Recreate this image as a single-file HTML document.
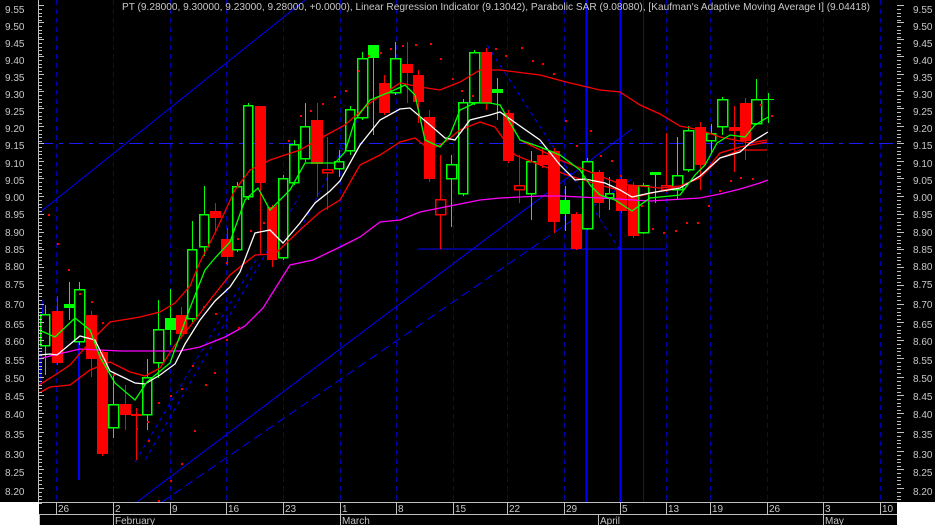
<!DOCTYPE html>
<html><head><meta charset="utf-8"><style>
html,body{margin:0;padding:0;background:#000;width:935px;height:525px;overflow:hidden}
svg{display:block}
text{font-family:"Liberation Sans",sans-serif;font-size:10px;fill:#c8c8c8}
</style></head><body>
<svg id="s" width="935" height="525" viewBox="0 0 935 525" xmlns="http://www.w3.org/2000/svg" shape-rendering="crispEdges">
<rect width="935" height="525" fill="#000"/>
<g id="grid"></g>
<g id="blue" stroke="#0000ff" fill="none" shape-rendering="auto">
<line x1="39" y1="213" x2="320" y2="-12" stroke-width="1"/>
<line x1="137" y1="502" x2="632" y2="129" stroke-width="1"/>
<line x1="162" y1="502" x2="635" y2="177" stroke-width="1" stroke-dasharray="9,5"/>
<line x1="135" y1="462" x2="262" y2="250" stroke-dasharray="4,4"/>
<line x1="145" y1="460" x2="300" y2="195" stroke-dasharray="4,4"/>
<line x1="300" y1="230" x2="360" y2="115" stroke-dasharray="4,4"/>
<line x1="487" y1="45" x2="622" y2="253" stroke-dasharray="4,4"/>
<line x1="43" y1="300" x2="40" y2="385"/>
<line x1="418" y1="249" x2="666" y2="249"/>
<line x1="39" y1="143.5" x2="897" y2="143.5" stroke-dasharray="14,6,4,6" stroke="#1a1aff"/>
<line x1="586.5" y1="0" x2="586.5" y2="502" stroke-width="2"/>
<line x1="620.5" y1="0" x2="620.5" y2="502" stroke-width="2"/>
<line x1="643.5" y1="0" x2="643.5" y2="502" stroke-width="1"/>
<line x1="79" y1="291" x2="79" y2="480" stroke-width="2"/>
</g>
<g id="cand"></g>
<g fill="none" stroke-width="1.3" shape-rendering="auto">
<polyline id="mag" stroke="#ff00ff" points="39,359 50,356 80,349 120,351 180,351 200,347 225,337 245,326 263,308 290,265 313,260 340,247 360,237 380,222 400,220 420,212 450,206 480,200 500,198 540,196 560,196 600,198 650,201 700,198 720,194 740,189 760,183 768,180"/>
<polyline stroke="#ff0000" points="39,385 55,375 70,365 90,342 110,322 140,317 160,312 175,303 190,286 200,262 215,233 235,190 250,170 270,160 300,150 330,133 345,125 370,103 400,83 420,87 440,90 460,82 480,70 500,70 540,75 570,83 600,90 620,92 640,105 660,114 680,126 700,130 720,137 750,143 767,140"/>
<polyline stroke="#ff0000" points="39,393 50,387 70,385 90,370 110,362 130,372 145,376 160,368 175,345 195,320 210,300 230,275 255,255 275,254 300,230 320,212 340,200 360,165 380,155 400,142 415,138 430,150 445,142 460,130 480,122 495,127 515,155 540,165 570,176 600,185 640,196 680,186 700,178 720,158 740,150 767,150"/>
<polyline stroke="#ff0000" points="520,140 560,160 590,172 620,184 660,188 680,186 700,178 720,153 740,147 767,142"/>
<polyline stroke="#ffffff" points="39,355 50,354 57,355 80,336 95,340 110,371 135,383 145,384 160,375 175,364 185,344 200,320 215,301 230,287 240,272 255,233 270,230 283,243 300,223 315,203 330,191 340,181 360,145 380,120 400,109 410,108 430,125 445,138 455,140 470,120 490,115 500,112 520,126 540,140 560,165 575,180 585,179 605,183 620,190 632,197 650,193 680,188 700,176 720,158 740,152 750,143 768,132"/>
<polyline stroke="#00ff00" points="39,330 55,337 75,318 90,330 100,357 115,383 135,400 147,382 170,363 190,308 205,270 215,258 230,242 245,200 258,188 270,210 290,190 305,163 320,163 335,163 345,152 355,120 370,100 390,92 405,85 415,95 425,140 440,147 450,135 460,110 475,103 490,103 500,105 520,140 540,147 560,155 580,170 590,185 600,195 615,200 632,211 650,198 680,195 695,175 705,165 717,143 730,135 745,137 755,125 768,117"/>
</g>
<g id="sar" fill="#ff0000"></g>
<g id="axes"></g>
<rect x="0" y="502" width="39" height="23" fill="#fff"/>
<rect x="897" y="502" width="38" height="23" fill="#fff"/>
<text x="122" y="10" textLength="748" lengthAdjust="spacingAndGlyphs">PT (9.28000, 9.30000, 9.23000, 9.28000, +0.0000), Linear Regression Indicator (9.13042), Parabolic SAR (9.08080), [Kaufman's Adaptive Moving Average I] (9.04418)</text>
<g id="lbl">
<text x="5" y="13">9.55</text><text x="5" y="30">9.50</text><text x="5" y="47">9.45</text><text x="5" y="64">9.40</text><text x="5" y="81">9.35</text><text x="5" y="98">9.30</text><text x="5" y="115">9.25</text><text x="5" y="132">9.20</text><text x="5" y="149">9.15</text><text x="5" y="167">9.10</text><text x="5" y="184">9.05</text><text x="5" y="201">9.00</text><text x="5" y="218">8.95</text><text x="5" y="236">8.90</text><text x="5" y="253">8.85</text><text x="5" y="270">8.80</text><text x="5" y="288">8.75</text><text x="5" y="308">8.70</text><text x="5" y="328">8.65</text><text x="5" y="345">8.60</text><text x="5" y="364">8.55</text><text x="5" y="382">8.50</text><text x="5" y="400">8.45</text><text x="5" y="418">8.40</text><text x="5" y="438">8.35</text><text x="5" y="458">8.30</text><text x="5" y="476">8.25</text><text x="5" y="495">8.20</text>
<text x="913" y="13">9.55</text><text x="913" y="30">9.50</text><text x="913" y="47">9.45</text><text x="913" y="64">9.40</text><text x="913" y="81">9.35</text><text x="913" y="98">9.30</text><text x="913" y="115">9.25</text><text x="913" y="132">9.20</text><text x="913" y="149">9.15</text><text x="913" y="167">9.10</text><text x="913" y="184">9.05</text><text x="913" y="201">9.00</text><text x="913" y="218">8.95</text><text x="913" y="236">8.90</text><text x="913" y="253">8.85</text><text x="913" y="270">8.80</text><text x="913" y="288">8.75</text><text x="913" y="308">8.70</text><text x="913" y="328">8.65</text><text x="913" y="345">8.60</text><text x="913" y="364">8.55</text><text x="913" y="382">8.50</text><text x="913" y="400">8.45</text><text x="913" y="418">8.40</text><text x="913" y="438">8.35</text><text x="913" y="458">8.30</text><text x="913" y="476">8.25</text><text x="913" y="495">8.20</text>
<text x="58" y="512">26</text><text x="115" y="512">2</text><text x="172" y="512">9</text><text x="228" y="512">16</text><text x="285" y="512">23</text><text x="342" y="512">1</text><text x="398" y="512">8</text><text x="455" y="512">15</text><text x="509" y="512">22</text><text x="566" y="512">29</text><text x="622" y="512">5</text><text x="668" y="512">13</text><text x="712" y="512">19</text><text x="769" y="512">26</text><text x="825" y="512">3</text><text x="882" y="512">10</text>
<text x="115" y="524">February</text><text x="342" y="524">March</text><text x="600" y="524">April</text><text x="825" y="524">May</text>
</g>
</svg>
<script>
var NS="http://www.w3.org/2000/svg";
function el(p,t,a){var e=document.createElementNS(NS,t);for(var k in a)e.setAttribute(k,a[k]);p.appendChild(e);return e;}
var g=document.getElementById('grid');
[56,113,170,226,283,340,396,453,507,564,666,710,767,823,880].forEach(function(x){el(g,'line',{x1:x+.5,y1:0,x2:x+.5,y2:502,stroke:'#0000b0','stroke-dasharray':'5,4'});});
// candles: x0,x1,top,bot,wt,wb,type
var C=[[40,49,314,345,305,375,'g'],[52,62,311,363,296,365,'r'],[64,73,304,308,282,320,'G'],[74,84,289,341,282,345,'g'],[86,96,315,359,311,377,'r'],[97,107,352,454,350,456,'r'],[108,118,404,427,374,438,'g'],[120,130,404,415,385,430,'r'],[131,141,414,415,408,460,'r'],[142,151,377,414,359,430,'g'],[153,163,329,362,300,378,'g'],[165,175,318,330,289,345,'G'],[176,186,315,334,307,338,'r'],[187,196,249,318,221,322,'g'],[199,208,214,246,186,256,'g'],[210,220,211,218,203,233,'r'],[221,232,239,257,228,265,'r'],[232,241,186,249,182,252,'g'],[243,252,105,196,103,200,'g'],[255,265,106,183,106,254,'r'],[267,276,207,260,205,267,'r'],[278,287,178,257,175,260,'g'],[289,298,144,182,140,185,'g'],[300,309,126,158,103,162,'g'],[311,322,120,164,103,197,'r'],[322,332,169,172,137,210,'o'],[334,343,161,168,150,177,'g'],[345,354,109,150,106,155,'g'],[357,367,58,117,52,120,'g'],[368,378,45,58,45,135,'G'],[379,389,83,113,75,115,'r'],[390,400,58,92,42,95,'g'],[402,412,64,73,42,103,'r'],[413,423,75,102,70,123,'r'],[424,434,117,179,110,182,'r'],[435,445,199,214,155,249,'o'],[446,456,164,178,155,227,'g'],[458,467,102,193,99,196,'g'],[469,479,52,102,50,105,'g'],[481,491,52,103,48,110,'r'],[492,502,89,93,78,120,'G'],[503,513,113,161,110,163,'r'],[514,524,185,189,155,203,'o'],[526,535,161,193,151,220,'g'],[537,547,155,165,148,168,'r'],[548,559,151,222,148,233,'r'],[560,569,200,214,186,231,'G'],[571,581,214,249,212,250,'r'],[582,592,161,228,158,230,'g'],[594,603,172,203,170,218,'r'],[605,613,193,197,177,210,'g'],[616,626,179,211,176,213,'r'],[628,638,185,236,182,238,'r'],[638,648,185,232,183,234,'g'],[650,660,172,175,172,203,'G'],[661,671,185,189,133,192,'o'],[672,682,175,189,137,199,'g'],[683,693,130,169,126,172,'g'],[695,705,127,165,122,190,'r'],[706,715,133,140,124,153,'g'],[717,727,99,126,97,135,'g'],[729,739,127,131,106,172,'r'],[740,750,103,141,98,160,'r'],[751,761,99,123,79,125,'g'],[763,773,99,100,93,123,'d']];
var cg=document.getElementById('cand');
C.forEach(function(c){var x0=c[0],x1=c[1],t=c[2],b=c[3],wt=c[4],wb=c[5],ty=c[6];var xm=Math.round((x0+x1)/2)+.5;
var col=(ty=='r'||ty=='o')?'#ff0000':'#00ff00';
el(cg,'line',{x1:xm,y1:wt,x2:xm,y2:wb,stroke:col});
if(ty=='d'){el(cg,'line',{x1:x0,y1:t+.5,x2:x1+1,y2:t+.5,stroke:col});return;}
if(ty=='g'||ty=='o'){el(cg,'rect',{x:x0+.5,y:t+.5,width:x1-x0,height:Math.max(1,b-t),fill:'#000',stroke:col,'stroke-width':1.5});}
else el(cg,'rect',{x:x0,y:t,width:x1-x0+1,height:Math.max(2,b-t),fill:col});});
var S=[[48,214],[57,243],[68,269],[79,293],[91,301],[102,322],[113,374],[124,405],[136,428],[147,421],[158,402],[170,395],[181,388],[192,365],[203,306],[215,313],[226,262],[237,238],[250,230],[263,222],[275,205],[288,140],[300,115],[310,110],[322,103],[334,96],[345,90],[358,70],[368,55],[380,52],[390,48],[402,45],[415,44],[430,43],[440,58],[452,78],[461,90],[472,95],[484,60],[495,48],[505,55],[521,47],[532,60],[542,63],[553,73],[565,120],[576,145],[590,130],[600,155],[611,160],[620,175],[631,192],[641,205],[652,228],[663,232],[675,230],[686,222],[697,222],[708,205],[719,190],[730,180],[740,177],[752,178],[760,104],[771,115],[148,440],[158,500],[170,480],[181,463],[194,430],[205,384],[214,372],[226,339],[238,327]];
var sg=document.getElementById('sar');
S.forEach(function(p){el(sg,'rect',{x:p[0],y:p[1],width:2,height:2});});
var a=document.getElementById('axes');
el(a,'line',{x1:38.5,y1:0,x2:38.5,y2:502,stroke:'#c0c0c0'});
for(var i=0;i<=27;i++){var y=Math.round(9+17*i+0.033*i*i)-4+.5;
el(a,'line',{x1:39,y1:y,x2:44,y2:y,stroke:'#c0c0c0'});el(a,'line',{x1:897,y1:y,x2:904,y2:y,stroke:'#c0c0c0'});
for(var j=1;j<5;j++){var yy=y+j*3.5;el(a,'line',{x1:39,y1:Math.round(yy)+.5,x2:42,y2:Math.round(yy)+.5,stroke:'#c0c0c0'});el(a,'line',{x1:897,y1:Math.round(yy)+.5,x2:901,y2:Math.round(yy)+.5,stroke:'#c0c0c0'});}}
el(a,'line',{x1:39,y1:502.5,x2:897,y2:502.5,stroke:'#c0c0c0'});
el(a,'line',{x1:39,y1:514.5,x2:897,y2:514.5,stroke:'#c0c0c0'});
[56,113,170,226,283,340,396,453,507,564,620,666,710,767,823,880,897].forEach(function(x){el(a,'line',{x1:x+.5,y1:502,x2:x+.5,y2:514,stroke:'#c0c0c0'});});
[39,113,340,598,823,897].forEach(function(x){el(a,'line',{x1:x+.5,y1:514,x2:x+.5,y2:525,stroke:'#c0c0c0'});});
</script>
</body></html>
